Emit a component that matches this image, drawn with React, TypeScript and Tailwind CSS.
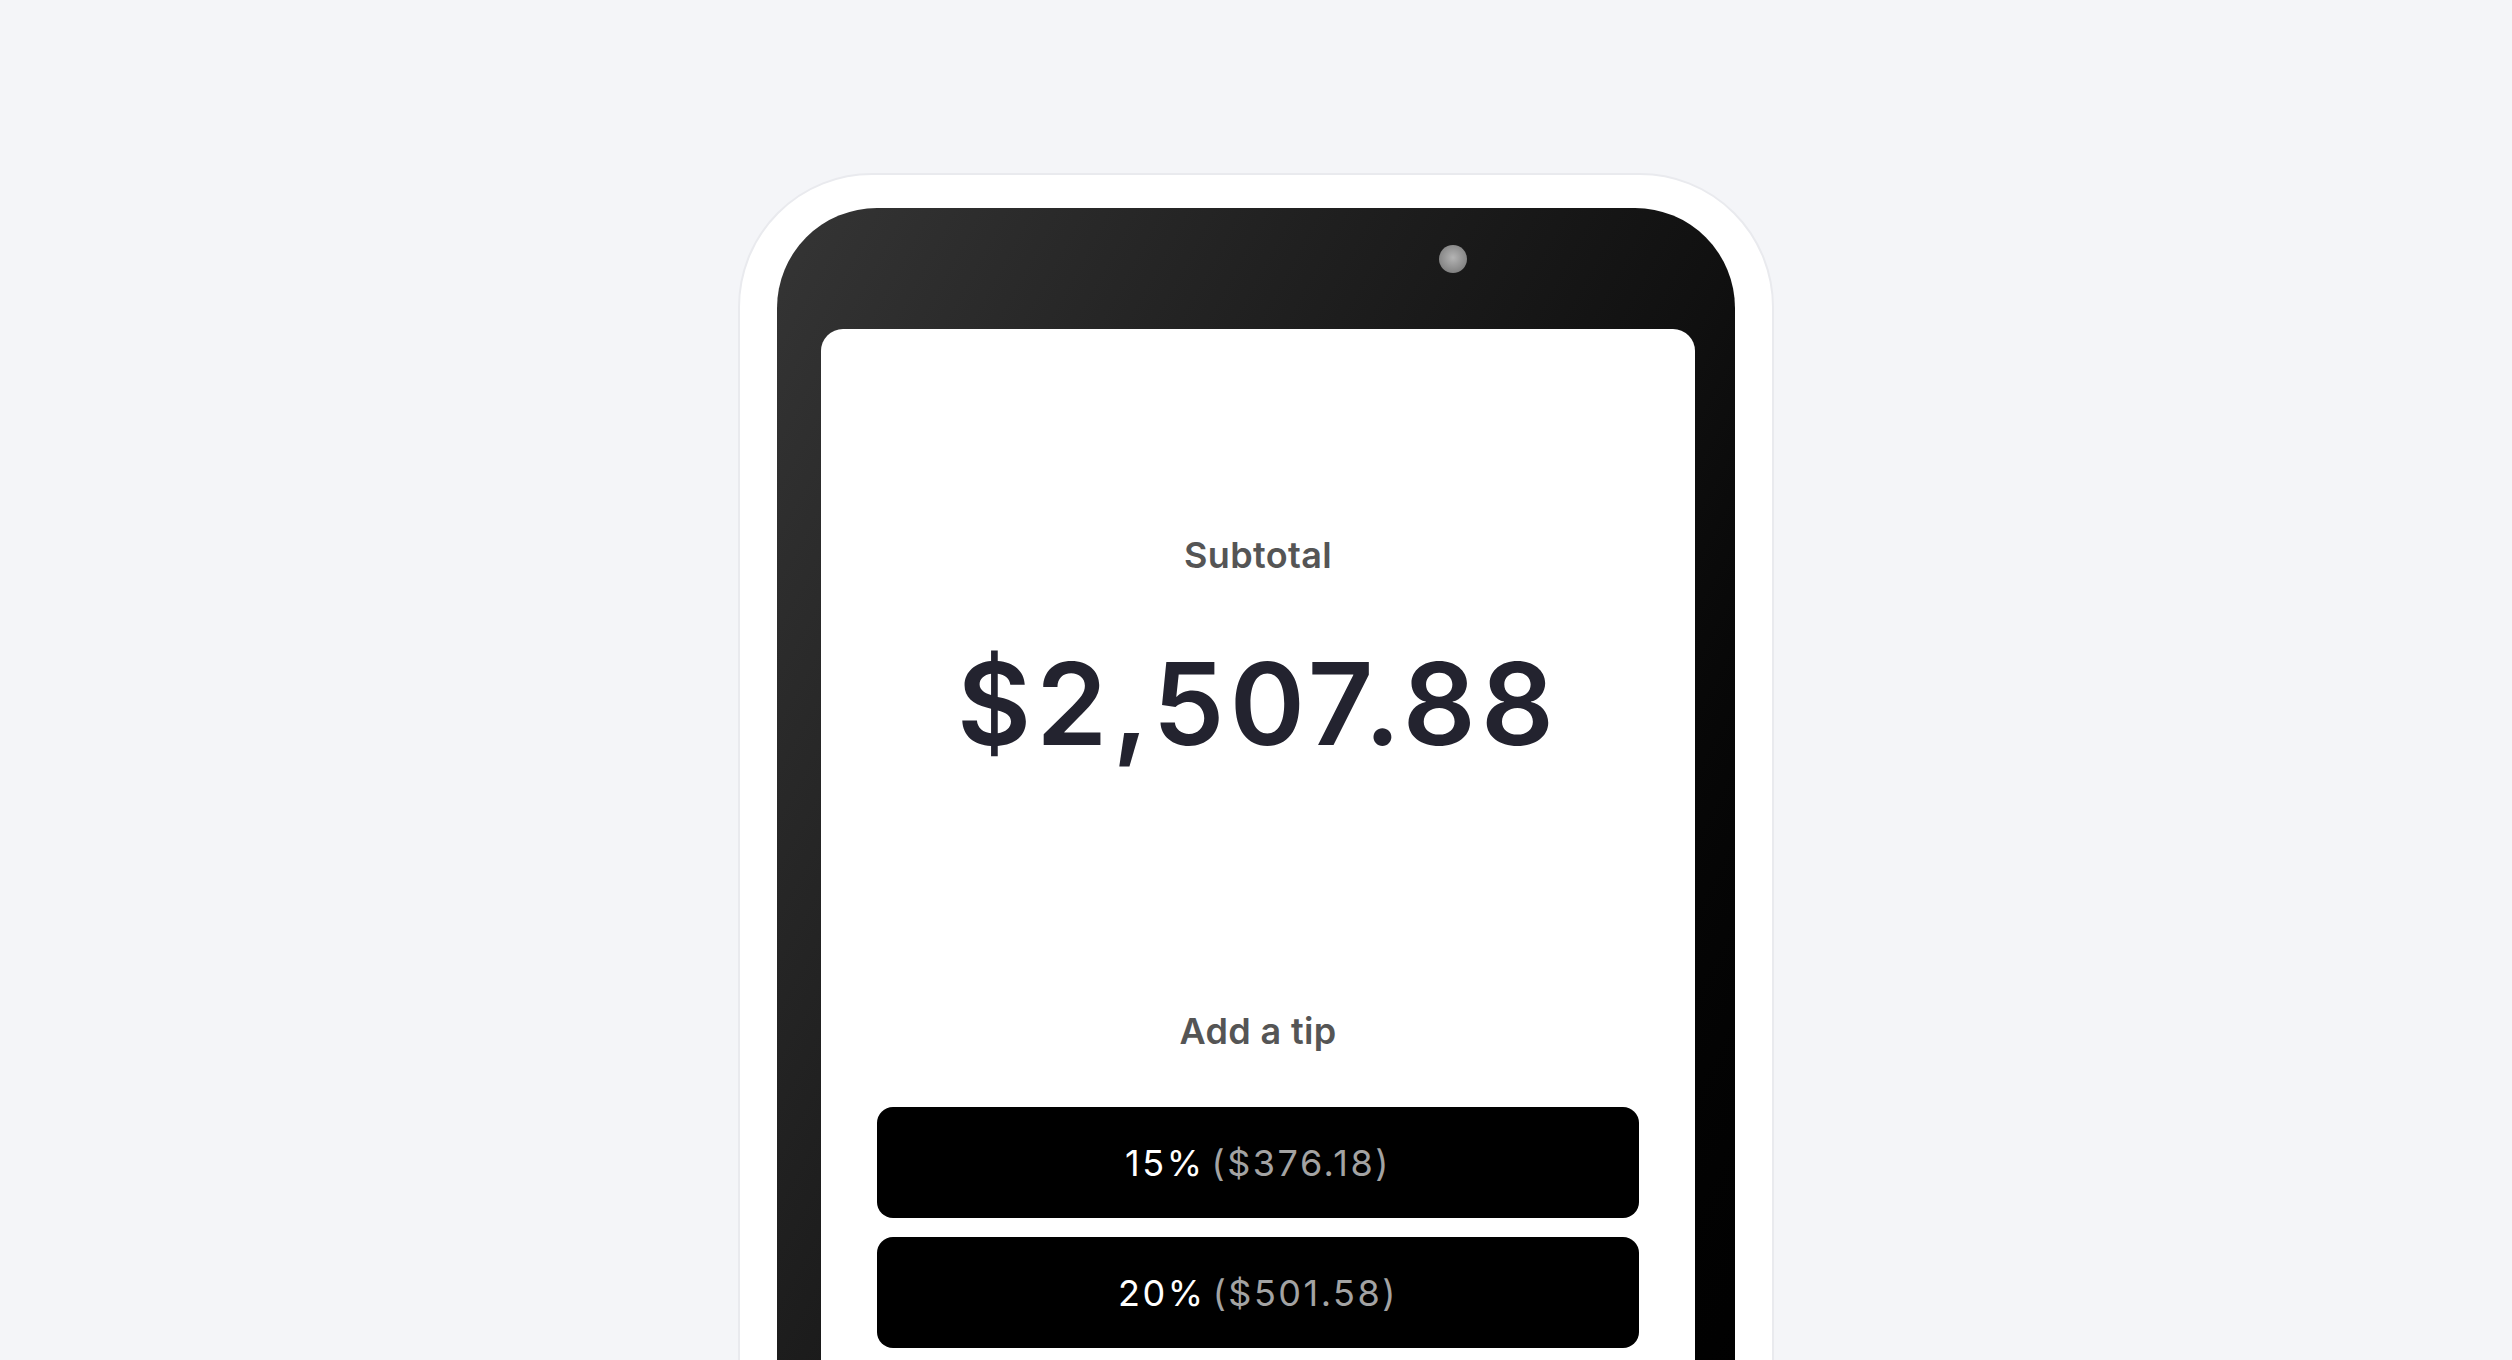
import React from 'react';

const tips = [
  { pct: '15%', amount: '($376.18)' },
  { pct: '20%', amount: '($501.58)' },
];

export default function App() {
  return (
    <div className="h-[1360px] w-full overflow-hidden bg-[#f4f5f8] flex justify-center pt-[173px] font-['Inter',sans-serif]">
      {/* device shell */}
      <div className="w-[1036px] h-[1800px] shrink-0 bg-white border-2 border-[#e9eaee] rounded-[134px] px-[37px] pt-[33px]">
        <div className="relative h-full rounded-[100px] bg-gradient-to-br from-[#353535] via-[#111111] to-[#000000] pl-[44px] pr-[40px] pt-[121px]">
          <div className="absolute left-[662px] top-[37px] w-[28px] h-[28px] rounded-full bg-[radial-gradient(circle_at_50%_45%,#b4b4b4_0%,#8e8e8e_55%,#6e6e6e_100%)]" />

          {/* screen */}
          <div className="h-full rounded-[22px] bg-white flex flex-col items-center pt-[204px]">
            <p className="text-[36px] leading-[44px] font-semibold text-[#555555] tracking-[0.01em]">Subtotal</p>
            <p className="mt-[70px] text-[114px] leading-[114px] font-semibold text-[#23232f] tracking-[0.045em]">
              $2,507.88
            </p>

            <p className="mt-[248px] text-[36px] leading-[44px] font-semibold text-[#555555] tracking-[0.01em]">Add a tip</p>

            <div className="mt-[54px] w-full px-[56px] flex flex-col gap-[19px]">
              {tips.map((t) => (
                <button
                  key={t.pct}
                  className="h-[111px] w-full rounded-[16px] bg-black flex items-center justify-center text-[36px] leading-[44px] tracking-[0.07em]"
                >
                  <span className="text-white">{t.pct}</span>
                  <span className="ml-[7px] text-[#a3a3a3]">{t.amount}</span>
                </button>
              ))}
            </div>
          </div>
        </div>
      </div>
    </div>
  );
}
